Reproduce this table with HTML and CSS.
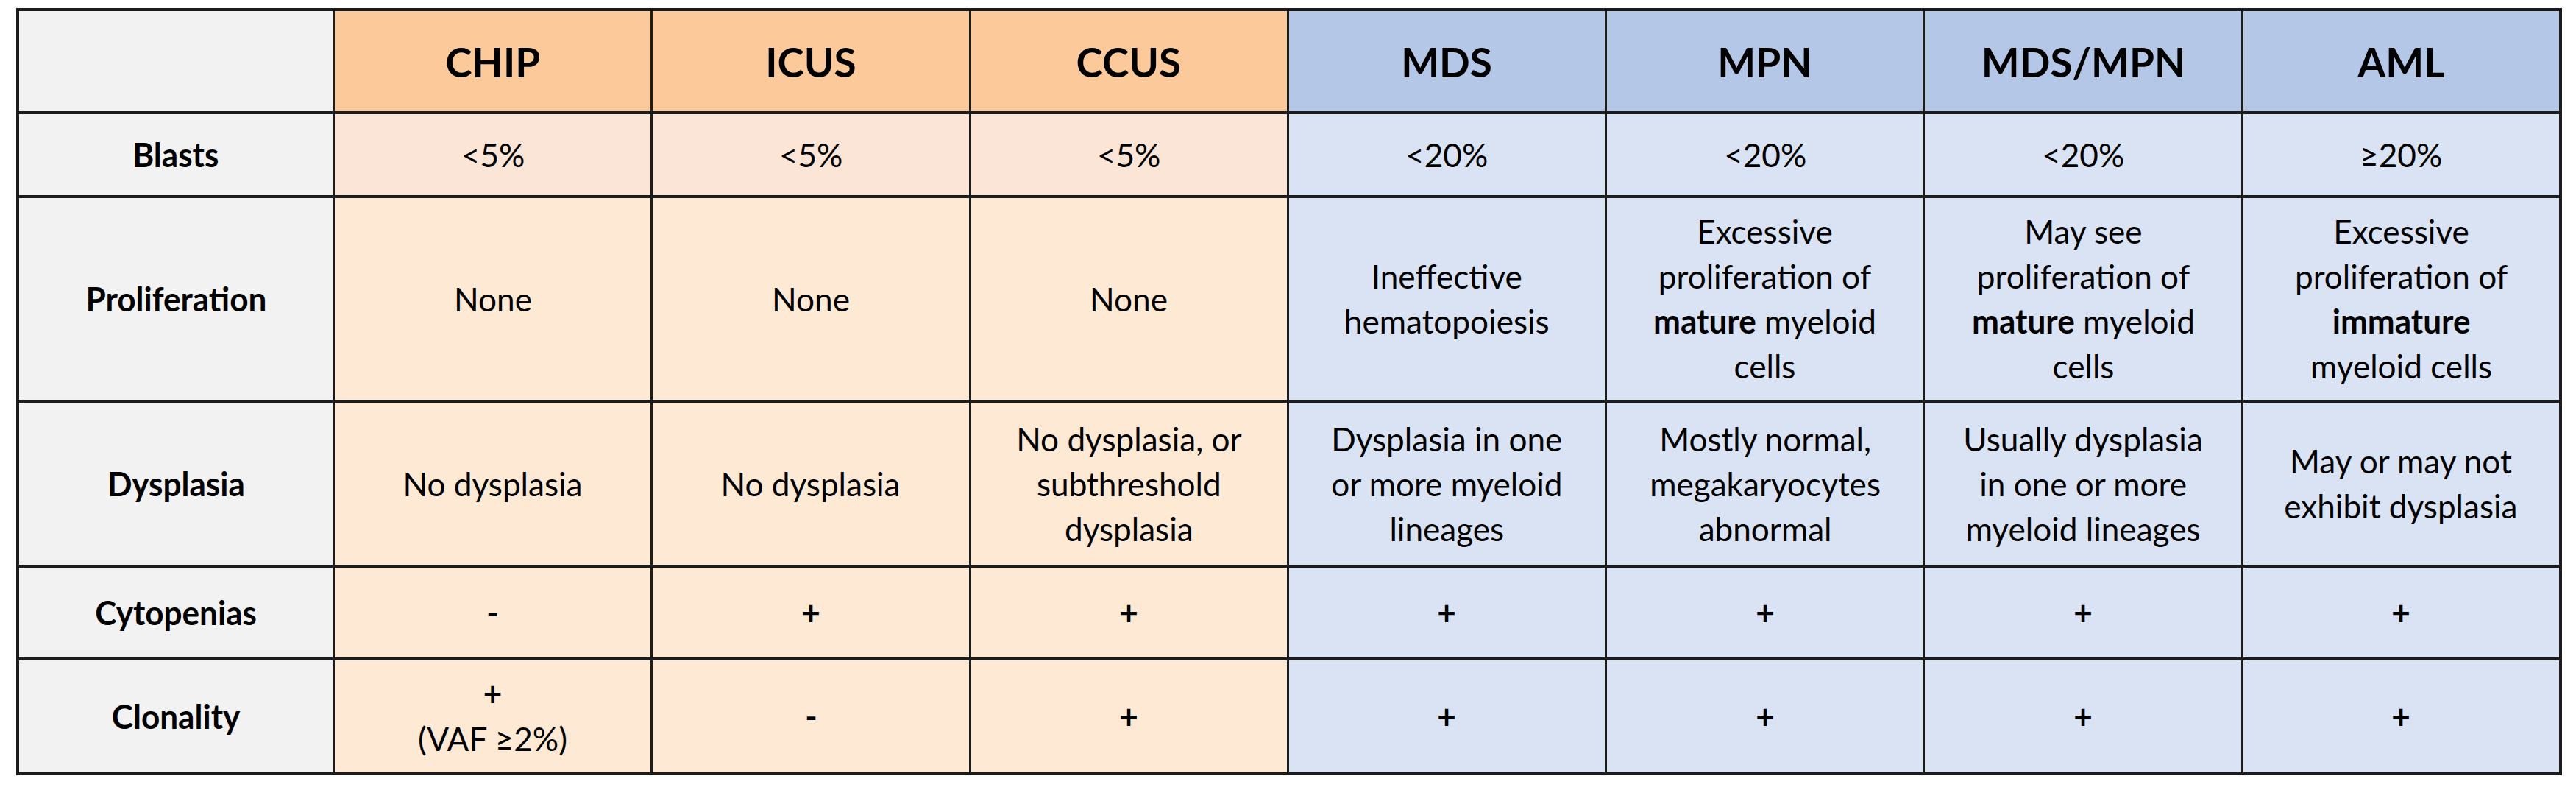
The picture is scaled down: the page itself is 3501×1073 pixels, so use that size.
FILE: index.html
```html
<!DOCTYPE html>
<html lang="en">
<head>
<meta charset="utf-8">
<title>Myeloid neoplasm comparison</title>
<link rel="stylesheet" href="styles.css">
</head>
<body>
<div class="chart">
  <div class="cell lbl"></div>
  <div class="cell head oh"><p>CHIP</p></div>
  <div class="cell head oh"><p>ICUS</p></div>
  <div class="cell head oh"><p>CCUS</p></div>
  <div class="cell head bh"><p>MDS</p></div>
  <div class="cell head bh"><p>MPN</p></div>
  <div class="cell head bh"><p>MDS/MPN</p></div>
  <div class="cell head bh"><p>AML</p></div>

  <div class="cell lbl"><p>Blasts</p></div>
  <div class="cell ob"><p>&lt;5%</p></div>
  <div class="cell ob"><p>&lt;5%</p></div>
  <div class="cell ob"><p>&lt;5%</p></div>
  <div class="cell bb"><p>&lt;20%</p></div>
  <div class="cell bb"><p>&lt;20%</p></div>
  <div class="cell bb"><p>&lt;20%</p></div>
  <div class="cell bb"><p>&ge;20%</p></div>

  <div class="cell lbl"><p>Proliferation</p></div>
  <div class="cell ob2"><p>None</p></div>
  <div class="cell ob2"><p>None</p></div>
  <div class="cell ob2"><p>None</p></div>
  <div class="cell bb"><p>Ineffective<br>hematopoiesis</p></div>
  <div class="cell bb"><p>Excessive<br>proliferation of<br><b>mature</b> myeloid<br>cells</p></div>
  <div class="cell bb"><p>May see<br>proliferation of<br><b>mature</b> myeloid<br>cells</p></div>
  <div class="cell bb"><p>Excessive<br>proliferation of<br><b>immature</b><br>myeloid cells</p></div>

  <div class="cell lbl"><p>Dysplasia</p></div>
  <div class="cell ob2"><p>No dysplasia</p></div>
  <div class="cell ob2"><p>No dysplasia</p></div>
  <div class="cell ob2"><p>No dysplasia, or<br>subthreshold<br>dysplasia</p></div>
  <div class="cell bb"><p>Dysplasia in one<br>or more myeloid<br>lineages</p></div>
  <div class="cell bb"><p>Mostly normal,<br>megakaryocytes<br>abnormal</p></div>
  <div class="cell bb"><p>Usually dysplasia<br>in one or more<br>myeloid lineages</p></div>
  <div class="cell bb"><p>May or may not<br>exhibit dysplasia</p></div>

  <div class="cell lbl"><p>Cytopenias</p></div>
  <div class="cell ob2 sign"><p>-</p></div>
  <div class="cell ob2 sign"><p>+</p></div>
  <div class="cell ob2 sign"><p>+</p></div>
  <div class="cell bb sign"><p>+</p></div>
  <div class="cell bb sign"><p>+</p></div>
  <div class="cell bb sign"><p>+</p></div>
  <div class="cell bb sign"><p>+</p></div>

  <div class="cell lbl"><p>Clonality</p></div>
  <div class="cell ob2"><p><b>+</b><br>(VAF &ge;2%)</p></div>
  <div class="cell ob2 sign"><p>-</p></div>
  <div class="cell ob2 sign"><p>+</p></div>
  <div class="cell bb sign"><p>+</p></div>
  <div class="cell bb sign"><p>+</p></div>
  <div class="cell bb sign"><p>+</p></div>
  <div class="cell bb sign"><p>+</p></div>
</div>
</body>
</html>
```

FILE: styles.css
```css
html, body {
  margin: 0;
  padding: 0;
  background: #ffffff;
}

body {
  font-family: Lato, "Noto Sans", sans-serif;
  color: #000000;
}

.chart {
  margin: 11px 0 0 22px;
  width: 3460px;
  box-sizing: border-box;
  display: grid;
  grid-template-columns: 426px repeat(7, minmax(0, 1fr));
  grid-template-rows: 136px 110px 274px 220px 122px 152px;
  column-gap: 3px;
  row-gap: 4px;
  padding: 4px;
  background: #1c1c1c;
}

.cell {
  display: flex;
  align-items: center;
  justify-content: center;
  text-align: center;
  font-size: 45px;
  line-height: 61px;
  min-width: 0;
}

.cell p {
  margin: 0;
  white-space: nowrap;
  transform: scaleX(0.98);
}

.cell b {
  font-weight: 700;
}

.lbl {
  background: #f2f2f2;
  font-weight: 700;
}

.head {
  font-size: 56px;
  font-weight: 700;
}

.oh {
  background: #fcc99a;
}

.bh {
  background: #b4c7e7;
}

.ob {
  background: #fbe5d7;
}

.ob2 {
  background: #fee9d5;
}

.bb {
  background: #dae3f3;
}

.sign {
  font-weight: 700;
}
```
